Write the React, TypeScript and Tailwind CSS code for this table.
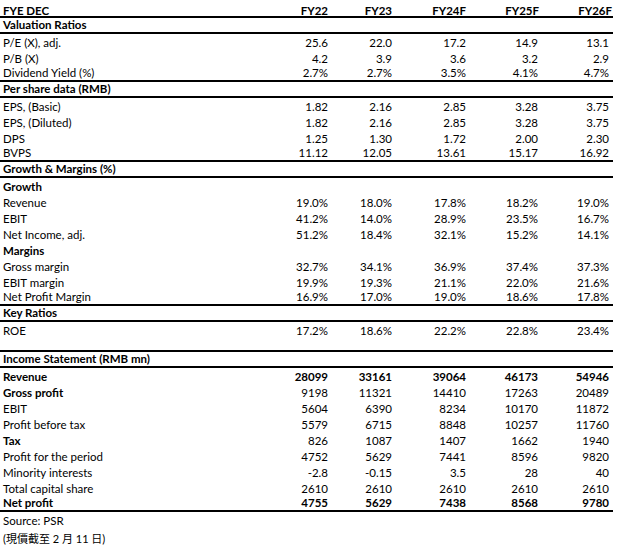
import React from "react";

type Row =
  | { kind: "head" }
  | { kind: "section"; label: string }
  | { kind: "sub"; label: string }
  | { kind: "data"; label: string; vals: string[]; boldLabel?: boolean; boldVals?: boolean; border?: boolean }
  | { kind: "blank" };

const rows: Row[] = [
  { kind: "head" },
  { kind: "section", label: "Valuation Ratios" },
  { kind: "data", label: "P/E (X), adj.", vals: ["25.6", "22.0", "17.2", "14.9", "13.1"] },
  { kind: "data", label: "P/B (X)", vals: ["4.2", "3.9", "3.6", "3.2", "2.9"] },
  { kind: "data", label: "Dividend Yield (%)", vals: ["2.7%", "2.7%", "3.5%", "4.1%", "4.7%"], border: true },
  { kind: "section", label: "Per share data (RMB)" },
  { kind: "data", label: "EPS, (Basic)", vals: ["1.82", "2.16", "2.85", "3.28", "3.75"] },
  { kind: "data", label: "EPS, (Diluted)", vals: ["1.82", "2.16", "2.85", "3.28", "3.75"] },
  { kind: "data", label: "DPS", vals: ["1.25", "1.30", "1.72", "2.00", "2.30"] },
  { kind: "data", label: "BVPS", vals: ["11.12", "12.05", "13.61", "15.17", "16.92"], border: true },
  { kind: "section", label: "Growth & Margins (%)" },
  { kind: "sub", label: "Growth" },
  { kind: "data", label: "Revenue", vals: ["19.0%", "18.0%", "17.8%", "18.2%", "19.0%"] },
  { kind: "data", label: "EBIT", vals: ["41.2%", "14.0%", "28.9%", "23.5%", "16.7%"] },
  { kind: "data", label: "Net Income, adj.", vals: ["51.2%", "18.4%", "32.1%", "15.2%", "14.1%"] },
  { kind: "sub", label: "Margins" },
  { kind: "data", label: "Gross margin", vals: ["32.7%", "34.1%", "36.9%", "37.4%", "37.3%"] },
  { kind: "data", label: "EBIT margin", vals: ["19.9%", "19.3%", "21.1%", "22.0%", "21.6%"] },
  { kind: "data", label: "Net Profit Margin", vals: ["16.9%", "17.0%", "19.0%", "18.6%", "17.8%"], border: true },
  { kind: "section", label: "Key Ratios" },
  { kind: "data", label: "ROE", vals: ["17.2%", "18.6%", "22.2%", "22.8%", "23.4%"] },
  { kind: "blank" },
  { kind: "section", label: "Income Statement (RMB mn)" },
  { kind: "data", label: "Revenue", vals: ["28099", "33161", "39064", "46173", "54946"], boldLabel: true, boldVals: true },
  { kind: "data", label: "Gross profit", vals: ["9198", "11321", "14410", "17263", "20489"], boldLabel: true },
  { kind: "data", label: "EBIT", vals: ["5604", "6390", "8234", "10170", "11872"] },
  { kind: "data", label: "Profit before tax", vals: ["5579", "6715", "8848", "10257", "11760"] },
  { kind: "data", label: "Tax", vals: ["826", "1087", "1407", "1662", "1940"], boldLabel: true },
  { kind: "data", label: "Profit for the period", vals: ["4752", "5629", "7441", "8596", "9820"] },
  { kind: "data", label: "Minority interests", vals: ["-2.8", "-0.15", "3.5", "28", "40"] },
  { kind: "data", label: "Total capital share", vals: ["2610", "2610", "2610", "2610", "2610"] },
  { kind: "data", label: "Net profit", vals: ["4755", "5629", "7438", "8568", "9780"], boldLabel: true, boldVals: true, border: true },
];

const grid = "grid grid-cols-[1fr_64px_64px_74px_73px_73px]";
const valPad = ["pr-[1px]", "pr-[1px]", "pr-[1px]", "pr-[2px]", "pr-[4px]"];

function RowView({ row }: { row: Row }) {
  if (row.kind === "head") {
    const heads = ["FY22", "FY23", "FY24F", "FY25F", "FY26F"];
    return (
      <div className={`${grid} h-[18px] items-end border-b-2 border-black font-bold leading-[10px]`}>
        <div className="pl-[3px]">FYE DEC</div>
        {heads.map((h) => (
          <div key={h} className="text-right pr-[1px]">
            {h}
          </div>
        ))}
      </div>
    );
  }
  if (row.kind === "section") {
    return (
      <div className="flex h-[16px] items-center border-b-2 border-black pl-[3px] font-bold leading-[14px]">
        {row.label}
      </div>
    );
  }
  if (row.kind === "sub") {
    return <div className="flex h-[16px] items-center pl-[3px] pt-[1px] font-bold leading-[16px]">{row.label}</div>;
  }
  if (row.kind === "blank") {
    return <div className="h-[14px] border-b-2 border-black" />;
  }
  return (
    <div
      className={`${grid} h-[16px] items-center ${row.border ? "border-b-2 border-black leading-[14px]" : "pt-[1px] leading-[16px]"}`}
    >
      <div className={`pl-[3px] whitespace-nowrap ${row.boldLabel ? "font-bold" : ""}`}>{row.label}</div>
      {row.vals.map((v, i) => (
        <div key={i} className={`text-right ${valPad[i]} ${row.boldVals ? "font-bold" : ""}`}>
          {v}
        </div>
      ))}
    </div>
  );
}

export default function App() {
  return (
    <div className="h-[553px] w-[620px] bg-white text-black">
      <div className="w-[613px] text-[11.5px] font-['Lato','Noto_Sans_CJK_TC',sans-serif]">
        {rows.map((r, i) => (
          <RowView key={i} row={r} />
        ))}
        <div className="flex h-[16px] items-center pl-[3px] pt-[1px] leading-[16px]">Source: PSR</div>
        <div className="flex h-[20px] items-center pl-[3px] pt-[1px] text-[11px] leading-[20px]">(現價截至 2 月 11 日)</div>
      </div>
    </div>
  );
}
